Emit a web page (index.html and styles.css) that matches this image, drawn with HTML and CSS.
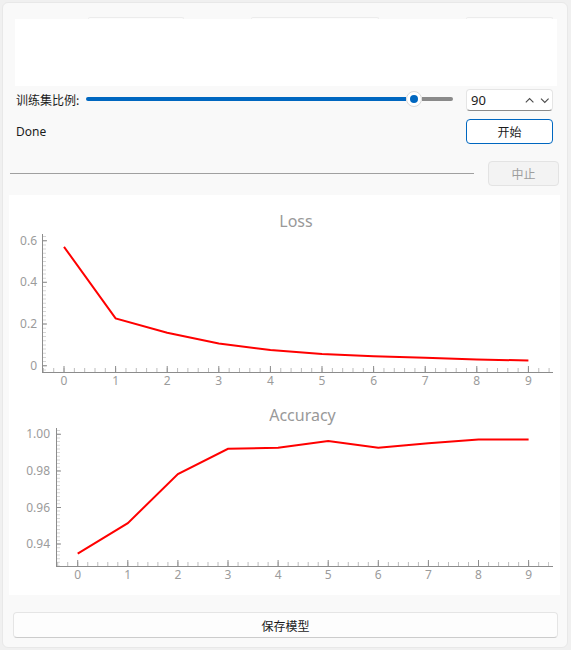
FILE: index.html
```html
<!DOCTYPE html>
<html lang="zh">
<head>
<meta charset="utf-8">
<title>训练</title>
<link rel="stylesheet" href="styles.css">
</head>
<body>
<div class="window">
  <div class="ghost-row">
    <span class="ghost g1"></span>
    <span class="ghost g2"></span>
    <span class="ghost g3"></span>
  </div>
  <div class="canvas-box"></div>

  <div class="slider-row">
    <span class="label">训练集比例:</span>
    <div class="slider">
      <div class="fill"></div>
      <div class="handle"><span class="dot"></span></div>
      <div class="rest"></div>
    </div>
    <div class="spin">
      <span class="spin-value">90</span>
      <svg class="spin-arrows" width="25" height="7" viewBox="0 0 25 7">
        <polyline points="0.8,5.4 4.6,1.6 8.4,5.4" />
        <polyline points="16,1.6 19.8,5.4 23.6,1.6" />
      </svg>
    </div>
  </div>

  <div class="status-row">
    <span class="status">Done</span>
    <button class="btn primary">开始</button>
  </div>

  <div class="progress-row">
    <div class="progress-line"></div>
    <button class="btn disabled">中止</button>
  </div>

  <div class="charts">
    <svg class="chart" width="551" height="200" viewBox="0 0 551 200">
      <text class="chart-title" x="287" y="31.5" text-anchor="middle">Loss</text>
      <line class="minor-y" x1="35.5" y1="41.1" x2="35.5" y2="177" stroke-dasharray="1 3.166" />
      <line class="major" x1="36" y1="45.2" x2="36" y2="172" stroke-width="4" stroke-dasharray="1 40.66" />
      <line class="minor-x" x1="33.9" y1="175" x2="541" y2="175" stroke-dasharray="1 9.32" />
      <line class="major" x1="54.5" y1="174" x2="521" y2="174" stroke-width="6" stroke-dasharray="1 50.6" />
      <line class="axis" x1="33.5" y1="39" x2="33.5" y2="178" />
      <line class="axis" x1="33" y1="177.5" x2="544" y2="177.5" />
      <text class="tick-label" x="28" y="49.7" text-anchor="end">0.6</text>
      <text class="tick-label" x="28" y="91.4" text-anchor="end">0.4</text>
      <text class="tick-label" x="28" y="133.1" text-anchor="end">0.2</text>
      <text class="tick-label" x="28" y="174.7" text-anchor="end">0</text>
      <text class="tick-label" x="55" y="190" text-anchor="middle">0</text>
      <text class="tick-label" x="106.6" y="190" text-anchor="middle">1</text>
      <text class="tick-label" x="158.2" y="190" text-anchor="middle">2</text>
      <text class="tick-label" x="209.8" y="190" text-anchor="middle">3</text>
      <text class="tick-label" x="261.4" y="190" text-anchor="middle">4</text>
      <text class="tick-label" x="313" y="190" text-anchor="middle">5</text>
      <text class="tick-label" x="364.6" y="190" text-anchor="middle">6</text>
      <text class="tick-label" x="416.2" y="190" text-anchor="middle">7</text>
      <text class="tick-label" x="467.8" y="190" text-anchor="middle">8</text>
      <text class="tick-label" x="519.4" y="190" text-anchor="middle">9</text>
      <polyline class="series" points="55,51.8 106.6,123.4 158.2,137.8 209.8,148.4 261.4,155.1 313,159 364.6,161.3 416.2,162.8 467.8,164.5 519.4,165.5" />
    </svg>
    <svg class="chart" width="551" height="200" viewBox="0 0 551 200">
      <text class="chart-title" x="293.5" y="25.5" text-anchor="middle">Accuracy</text>
      <line class="minor-y" x1="49.5" y1="35.1" x2="49.5" y2="171" stroke-dasharray="1 2.66" />
      <line class="major" x1="50" y1="38.8" x2="50" y2="151" stroke-width="4" stroke-dasharray="1 35.6" />
      <line class="minor-x" x1="48.2" y1="169" x2="540" y2="169" stroke-dasharray="1 9.02" />
      <line class="major" x1="68.2" y1="168" x2="521" y2="168" stroke-width="6" stroke-dasharray="1 49.1" />
      <line class="axis" x1="47.5" y1="33" x2="47.5" y2="172" />
      <line class="axis" x1="47" y1="171.5" x2="544" y2="171.5" />
      <text class="tick-label" x="41" y="43.3" text-anchor="end">1.00</text>
      <text class="tick-label" x="41" y="79.9" text-anchor="end">0.98</text>
      <text class="tick-label" x="41" y="116.5" text-anchor="end">0.96</text>
      <text class="tick-label" x="41" y="153.1" text-anchor="end">0.94</text>
      <text class="tick-label" x="68.7" y="184" text-anchor="middle">0</text>
      <text class="tick-label" x="118.8" y="184" text-anchor="middle">1</text>
      <text class="tick-label" x="168.9" y="184" text-anchor="middle">2</text>
      <text class="tick-label" x="219" y="184" text-anchor="middle">3</text>
      <text class="tick-label" x="269.1" y="184" text-anchor="middle">4</text>
      <text class="tick-label" x="319.2" y="184" text-anchor="middle">5</text>
      <text class="tick-label" x="369.3" y="184" text-anchor="middle">6</text>
      <text class="tick-label" x="419.4" y="184" text-anchor="middle">7</text>
      <text class="tick-label" x="469.5" y="184" text-anchor="middle">8</text>
      <text class="tick-label" x="519.6" y="184" text-anchor="middle">9</text>
      <polyline class="series" points="68.7,158.6 118.8,128.2 168.9,79 219,53.8 269.1,52.7 319.2,46.1 369.3,52.7 419.4,48.3 469.5,44.6 519.6,44.6" />
    </svg>
  </div>

  <button class="btn save">保存模型</button>
</div>
</body>
</html>
```

FILE: styles.css
```css
* {
  box-sizing: border-box;
}

html,
body {
  margin: 0;
  padding: 0;
}

body {
  width: 571px;
  height: 650px;
  overflow: hidden;
  background: #f0f0f0;
  font-family: "Noto Sans", "Noto Sans CJK SC", sans-serif;
  font-size: 12px;
  line-height: 16px;
  color: #1b1b1b;
}

.window {
  margin: 2px 0 0 2px;
  width: 566px;
  height: 646px;
  background: #f9f9f9;
  border: 1px solid #e8e8e8;
  border-radius: 6px;
}

/* buttons hidden behind the drawing area, only their top edge shows */
.ghost-row {
  display: flex;
  height: 2px;
  margin-top: 14px;
}

.ghost {
  height: 2px;
  background: #fcfcfc;
  border: 1px solid #ececec;
  border-bottom: none;
  border-radius: 3px 3px 0 0;
}

.g1 {
  margin-left: 85px;
  width: 96px;
}

.g2 {
  margin-left: 67px;
  width: 128px;
}

.g3 {
  margin-left: 87px;
  width: 87px;
}

.canvas-box {
  margin-left: 12px;
  width: 542px;
  height: 67px;
  background: #ffffff;
}

/* slider row */
.slider-row {
  display: flex;
  align-items: center;
  height: 22px;
  margin-top: 3px;
  padding-left: 13px;
}

.label {
  width: 70px;
  font-family: "Noto Sans CJK SC", sans-serif;
  font-size: 12px;
  white-space: nowrap;
}

.slider {
  display: flex;
  align-items: center;
  width: 367px;
  height: 16px;
  margin-top: -2px;
}

.fill {
  width: 320px;
  height: 4px;
  background: #0067c0;
  border-radius: 2px 0 0 2px;
}

.handle {
  display: flex;
  align-items: center;
  justify-content: center;
  width: 16px;
  height: 16px;
  border-radius: 50%;
  background: #ffffff;
  border: 1px solid #d9d9d9;
}

.dot {
  width: 8px;
  height: 8px;
  border-radius: 50%;
  background: #0067c0;
}

.rest {
  flex: 1;
  height: 4px;
  background: #8a8a8a;
  border-radius: 0 2px 2px 0;
}

.spin {
  display: flex;
  align-items: center;
  margin-left: 13px;
  width: 87px;
  height: 22px;
  padding-left: 4px;
  background: #ffffff;
  border: 1px solid #e5e5e5;
  border-bottom: 1px solid #8a8a8a;
  border-radius: 4px;
}

.spin-value {
  font-size: 13px;
  color: #1b1b1b;
}

.spin-arrows {
  margin-left: auto;
  margin-right: 2px;
  fill: none;
  stroke: #4a4a4a;
  stroke-width: 1.1;
}

/* status row */
.status-row {
  display: flex;
  align-items: center;
  justify-content: space-between;
  height: 25px;
  margin-top: 8px;
  padding-left: 13px;
  padding-right: 14px;
}

.btn {
  display: flex;
  align-items: center;
  justify-content: center;
  margin: 0;
  padding: 0;
  font-family: "Noto Sans CJK SC", sans-serif;
  font-size: 12px;
  color: #1b1b1b;
  background: #fdfdfd;
  border: 1px solid #e5e5e5;
  border-bottom-color: #cccccc;
  border-radius: 4px;
}

.primary {
  width: 87px;
  height: 25px;
  background: #ffffff;
  border: 1px solid #0067c0;
}

/* progress row */
.progress-row {
  display: flex;
  align-items: center;
  height: 25px;
  margin-top: 17px;
  padding-left: 7px;
}

.progress-line {
  width: 464px;
  height: 1px;
  background: #a0a0a0;
}

.disabled {
  margin-left: 14px;
  width: 71px;
  height: 25px;
  color: #9d9d9d;
  background: #f3f3f3;
  border: 1px solid #e3e3e3;
}

/* charts */
.charts {
  margin-top: 9px;
  margin-left: 6px;
  width: 551px;
  height: 400px;
  background: #ffffff;
}

.chart {
  display: block;
}

.chart-title {
  font-family: "Noto Sans", sans-serif;
  font-size: 16px;
  fill: #999999;
}

.tick-label {
  font-family: "Noto Sans", sans-serif;
  font-size: 12px;
  fill: #9b9b9b;
}

.axis {
  stroke: #8c8c8c;
  stroke-width: 1;
}

.major {
  stroke: #8c8c8c;
}

.minor-x {
  stroke: #bdbdbd;
  stroke-width: 4;
}

.minor-y {
  stroke: #d6d6d6;
  stroke-width: 3;
}

.series {
  fill: none;
  stroke: #ff0000;
  stroke-width: 2;
  stroke-linejoin: miter;
}

/* save */
.save {
  margin-top: 17px;
  margin-left: 10px;
  width: 545px;
  height: 26px;
}
```
